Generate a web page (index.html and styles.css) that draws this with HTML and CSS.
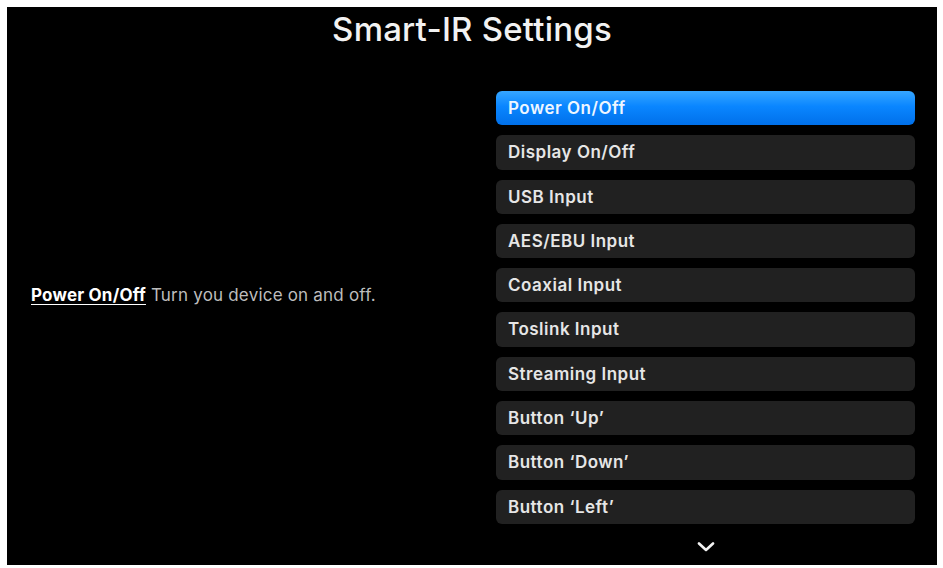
FILE: index.html
```html
<!DOCTYPE html>
<html lang="en">
<head>
<meta charset="utf-8">
<title>Smart-IR Settings</title>
<link rel="stylesheet" href="styles.css">
</head>
<body>
<div class="screen">
  <h1 class="title">Smart-IR Settings</h1>
  <div class="content">
    <div class="info">
      <p class="desc"><span class="desc-name">Power On/Off</span> Turn you device on and off.</p>
    </div>
    <div class="menu-col">
      <ul class="menu">
        <li class="item active">Power On/Off</li>
        <li class="item">Display On/Off</li>
        <li class="item">USB Input</li>
        <li class="item">AES/EBU Input</li>
        <li class="item">Coaxial Input</li>
        <li class="item">Toslink Input</li>
        <li class="item">Streaming Input</li>
        <li class="item">Button ‘Up’</li>
        <li class="item">Button ‘Down’</li>
        <li class="item">Button ‘Left’</li>
      </ul>
      <div class="more">
        <svg width="18" height="10" viewBox="0 0 18 10"><path d="M2 1.5 L9 8 L16 1.5" fill="none" stroke="#f2f2f2" stroke-width="2.6" stroke-linecap="round" stroke-linejoin="round"/></svg>
      </div>
    </div>
  </div>
</div>
</body>
</html>
```
FILE: styles.css
```css
html, body {
  background: #ffffff;
}
body {
  margin: 7px 6px 3px 7px;
  font-family: Inter, "Noto Sans", "DejaVu Sans", sans-serif;
}
.screen {
  background: #000;
  height: 558px;
  display: flex;
  flex-direction: column;
}
.title {
  margin: 0;
  padding-top: 0;
  height: 48px;
  line-height: 44px;
  text-align: center;
  font-size: 33px;
  font-weight: 500;
  color: #f2f2f2;
  letter-spacing: 0.2px;
}
.content {
  flex: 1;
  display: flex;
}
.info {
  width: 465px;
  padding-left: 24px;
}
.desc {
  margin: 0;
  padding-top: 230px;
  font-size: 17px;
  line-height: 20px;
  letter-spacing: 0.2px;
  color: #bdbdbd;
}
.desc-name {
  color: #fff;
  font-weight: 700;
  text-decoration: underline;
  text-underline-offset: 3px;
}
.menu-col {
  width: 419px;
  display: flex;
  flex-direction: column;
}
.menu {
  list-style: none;
  margin: 36px 0 0;
  padding: 0;
  display: flex;
  flex-direction: column;
  gap: 10px;
}
.item {
  height: 34.3px;
  line-height: 34px;
  padding-left: 12px;
  border-radius: 6px;
  background: #212121;
  color: #e6e6e6;
  font-size: 17px;
  font-weight: 600;
  letter-spacing: 0.5px;
}
.item.active {
  background: linear-gradient(180deg, #36a6ff 0%, #0a86ff 45%, #0070ea 100%);
  color: #eef6ff;
}
.more {
  display: flex;
  justify-content: center;
  margin-top: 18px;
}
.more svg {
  display: block;
}
```
